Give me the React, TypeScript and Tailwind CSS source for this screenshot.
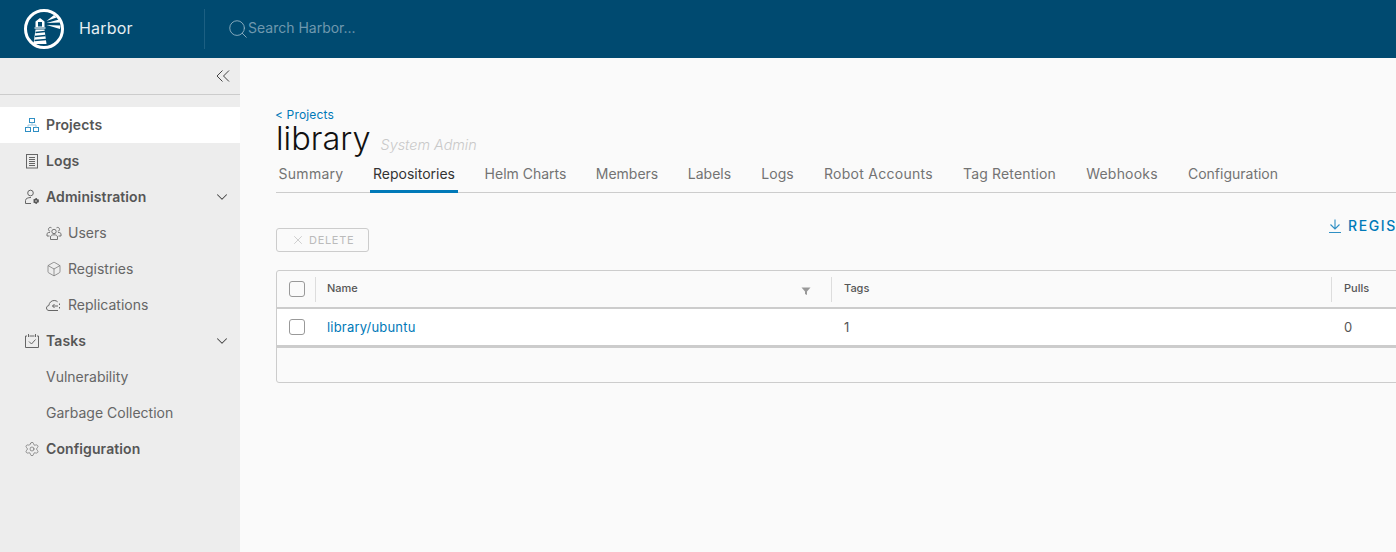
import { ChevronDown, Search, X, Box, Settings } from "lucide-react";

const font = "font-['Inter','Open_Sans',sans-serif]";

const tabs = [
  { label: "Summary", w: "w-[70px] tracking-[0.25px]" },
  { label: "Repositories", active: true, w: "w-[88px]" },
  { label: "Helm Charts", w: "w-[87px]" },
  { label: "Members", w: "w-[68px]" },
  { label: "Labels", w: "w-[49px]" },
  { label: "Logs", w: "w-[39px]" },
  { label: "Robot Accounts", w: "w-[115px] tracking-[0.28px]" },
  { label: "Tag Retention", w: "w-[99px] tracking-[0.15px]" },
  { label: "Webhooks", w: "w-[78px] tracking-[0.2px]" },
  { label: "Configuration", w: "w-[96px]" },
];

function HarborLogo() {
  return (
    <svg width="42" height="42" viewBox="0 0 42 42" fill="none">
      <circle cx="21" cy="21" r="18.5" stroke="white" strokeWidth="3" />
      {/* lantern */}
      <path d="M12.5 19 V13.5 L17 10 L21.5 13.5 V19 Z" fill="white" />
      <rect x="15" y="14" width="4" height="4.5" fill="#004a70" />
      <path d="M11.5 20 H22.5" stroke="white" strokeWidth="1.2" />
      {/* tower */}
      <path d="M12.5 21.5 H21.5 L23.5 36 H10.5 Z" fill="white" />
      <path d="M12.5 24.5 L22 23.5 M12 28.5 L22.5 27.5 M11.5 32.5 L23 31.5" stroke="#004a70" strokeWidth="1.6" />
      {/* beams */}
      <path d="M23.5 13 L31 7 L33.5 9.5 Z M23.5 15 L36 11.5 L37 14.5 Z M23.5 17 L37.5 17.5 L37 21 Z" fill="white" />
    </svg>
  );
}

function ProjectsIcon() {
  return (
    <svg width="16" height="16" viewBox="0 0 16 16" fill="none" stroke="#2f8fc4" strokeWidth="1">
      <rect x="5.5" y="1.5" width="5" height="4" />
      <rect x="1.5" y="10.5" width="5" height="4" />
      <rect x="9.5" y="10.5" width="5" height="4" />
      <path d="M8 5.5 V8 M4 10.5 V8 H12 V10.5" stroke="#9cc6de" />
    </svg>
  );
}

function LogsIcon() {
  return (
    <svg width="16" height="16" viewBox="0 0 16 16" fill="none" stroke="#666" strokeWidth="1">
      <rect x="2.5" y="1.5" width="11" height="13.5" />
      <path d="M5 4.5 H11 M5 6.5 H11 M5 8.5 H11 M5 10.5 H11 M5 12.5 H11" />
    </svg>
  );
}

function AdminIcon() {
  return (
    <svg width="16" height="16" viewBox="0 0 16 16" fill="none" stroke="#666" strokeWidth="1">
      <circle cx="6.5" cy="4" r="2.8" />
      <path d="M1.5 14.5 V11.5 C1.5 9.5 4 8.5 7 8.5 M1.5 14.5 H7" />
      <circle cx="12" cy="12" r="2.2" fill="#555" stroke="#555" strokeWidth="1.4" strokeDasharray="1.4 0.8" />
      <circle cx="12" cy="12" r="0.8" fill="#ededed" stroke="none" />
    </svg>
  );
}

function UsersIcon() {
  return (
    <svg width="16" height="16" viewBox="0 0 16 16" fill="none" stroke="#666" strokeWidth="0.9">
      <circle cx="8" cy="6.5" r="2.2" />
      <path d="M4.5 14.5 V12 C4.5 10.5 6 9.8 8 9.8 C10 9.8 11.5 10.5 11.5 12 V14.5 Z" />
      <path d="M5.5 2.8 A1.9 1.9 0 1 0 4.2 6.2 M10.5 2.8 A1.9 1.9 0 1 1 11.8 6.2" />
      <path d="M3.5 11 H1 V9 C1 8 2.2 7.4 4 7.4 M12.5 11 H15 V9 C15 8 13.8 7.4 12 7.4" />
    </svg>
  );
}

function CloudIcon() {
  return (
    <svg width="16" height="16" viewBox="0 0 16 16" fill="none" stroke="#666" strokeWidth="1">
      <path d="M12 13.5 H3 C1.4 13.5 0.5 12.4 0.5 11 C0.5 9.6 1.5 8.7 2.8 8.6 C3.2 5.5 5.4 3.5 8.2 3.5 C9.6 3.5 10.8 4 11.6 4.8" />
      <path d="M6.5 9 H12 M8.5 7 L6.5 9 L8.5 11" />
      <path d="M13.5 6.5 V8 M13.5 10 V11.5" />
    </svg>
  );
}

function TasksIcon() {
  return (
    <svg width="16" height="16" viewBox="0 0 16 16" fill="none" stroke="#666" strokeWidth="1">
      <path d="M3 3 H1.5 V14.5 H14.5 V3 H13" />
      <path d="M5.5 3 H10.5" />
      <path d="M4.5 1 V4 M11.5 1 V4" />
      <path d="M5 8.5 L7.5 11 L11.5 6.5" />
    </svg>
  );
}

function NavRow({ icon, label, active, chevron }: { icon: React.ReactNode; label: string; active?: boolean; chevron?: boolean }) {
  return (
    <div className={`flex h-9 items-center pl-[24px] pr-[9px] ${active ? "bg-white" : ""}`}>
      <span className="flex w-[22px] shrink-0">{icon}</span>
      <span className="pb-[2px] text-[14px] font-semibold tracking-[0.1px] text-[#565656]">{label}</span>
      {chevron && <ChevronDown className="ml-auto h-[18px] w-[18px] text-[#444]" strokeWidth={1.4} />}
    </div>
  );
}

function SubRow({ icon, label }: { icon?: React.ReactNode; label: string }) {
  return (
    <div className="flex h-9 items-center pl-[46px]">
      {icon && <span className="flex w-[22px] shrink-0">{icon}</span>}
      <span className="pb-[2px] text-[14px] text-[#666]">{label}</span>
    </div>
  );
}

export default function App() {
  return (
    <div className={`flex h-[552px] w-[1396px] flex-col overflow-hidden bg-[#fafafa] ${font}`}>
      {/* Header */}
      <header className="flex h-[58px] shrink-0 items-center bg-[#004a70]">
        <div className="flex h-10 w-[205px] shrink-0 items-center border-r border-[#1c5f82] pl-[23px]">
          <HarborLogo />
          <span className="mb-[2px] ml-[14px] text-[16px] tracking-[0.2px] text-[#e6eef2]">Harbor</span>
        </div>
        <Search className="ml-[22px] h-[22px] w-[22px] text-[#8fb0c2]" strokeWidth={1} />
        <span className="-ml-[1px] mb-[3px] text-[14px] text-[#6f98ae]">Search Harbor...</span>
      </header>

      <div className="flex min-h-0 flex-1">
        {/* Sidebar */}
        <aside className="w-[240px] shrink-0 bg-[#ededed]">
          <div className="flex h-[37px] items-center justify-end border-b border-[#ccc] pr-[10px]">
            <svg width="14" height="14" viewBox="0 0 14 14" fill="none" stroke="#444" strokeWidth="1">
              <path d="M6.5 1.5 L1 7 L6.5 12.5 M13 1.5 L7.5 7 L13 12.5" />
            </svg>
          </div>
          <nav className="mt-3">
            <NavRow icon={<ProjectsIcon />} label="Projects" active />
            <NavRow icon={<LogsIcon />} label="Logs" />
            <NavRow icon={<AdminIcon />} label="Administration" chevron />
            <SubRow icon={<UsersIcon />} label="Users" />
            <SubRow icon={<Box className="h-4 w-4 text-[#666]" strokeWidth={1} />} label="Registries" />
            <SubRow icon={<CloudIcon />} label="Replications" />
            <NavRow icon={<TasksIcon />} label="Tasks" chevron />
            <SubRow label="Vulnerability" />
            <SubRow label="Garbage Collection" />
            <NavRow icon={<Settings className="h-4 w-4 text-[#666]" strokeWidth={1} />} label="Configuration" />
          </nav>
        </aside>

        {/* Main */}
        <main className="min-w-0 flex-1 overflow-hidden pl-9 pt-[50px]">
          <div className="w-[1300px]">
            <div className="-ml-[1px] text-[12px] leading-[14px] tracking-[0.15px] text-[#0079b8]">&lt; Projects</div>
            <div className="flex h-[35px] items-end">
              <h1 className="mb-[1px] text-[32.5px] font-light leading-[34px] text-[#111]">library</h1>
              <span className="mb-[1px] ml-[10px] text-[14.4px] font-light italic text-[#c9c9c9]">System Admin</span>
            </div>
            <div className="flex h-[36px] items-stretch gap-6 border-b border-[#ccc]">
              {tabs.map((t) => (
                <div
                  key={t.label}
                  className={`-mb-px flex h-[36px] items-center justify-center whitespace-nowrap border-b-[3px] text-[14px] ${t.w} ${t.active ? "border-[#0079b8] text-[#333]" : "border-transparent text-[#737373]"}`}
                >
                  {t.label}
                </div>
              ))}
            </div>

            <div className="mt-[23px] flex items-start justify-between">
              <div className="mt-[12px] flex h-6 w-[93px] items-center rounded-[3px] border border-[#ccc] pl-[14px]">
                <X className="h-[14px] w-[14px] text-[#bbb]" strokeWidth={1.2} />
                <span className="ml-[4px] text-[11px] tracking-[0.7px] text-[#bbb]">DELETE</span>
              </div>
              <div className="-mt-[1px] flex w-[249px] items-center">
                <svg width="16" height="16" viewBox="0 0 16 16" fill="none" stroke="#2f8fc4" strokeWidth="1.1">
                  <path d="M8 1.5 V11 M3.5 6.5 L8 11 L12.5 6.5 M2 14.5 H14" />
                </svg>
                <span className="mb-[1px] ml-[5px] whitespace-nowrap text-[14px] font-medium tracking-[1.6px] text-[#0079b8]">REGISTRY CERTIFICATE</span>
              </div>
            </div>

            {/* Table */}
            <div className="mt-[18px] w-[1300px] rounded-[3px] border border-[#ccc]">
              <div className="flex h-[38px] items-center border-b-2 border-[#ccc]">
                <div className="flex w-[38px] items-center justify-center pl-[1px]">
                  <div className="h-4 w-4 rounded-[3px] border border-[#999]" />
                </div>
                <div className="flex h-[25px] w-[516px] items-center border-l border-[#ddd] pl-[11px] pr-[20px]">
                  <span className="mb-[1px] text-[11px] font-medium text-[#565656]">Name</span>
                  <svg className="ml-auto mt-[3px]" width="10" height="10" viewBox="0 0 10 10">
                    <path d="M0.5 1.5 H9.5 L6 5.5 V9 L4 8 V5.5 Z" fill="#999" />
                  </svg>
                </div>
                <div className="flex h-[25px] w-[500px] items-center border-l border-[#ddd] pl-[12px]">
                  <span className="mb-[1px] text-[11px] font-medium text-[#565656]">Tags</span>
                </div>
                <div className="flex h-[25px] items-center border-l border-[#ddd] pl-[12px]">
                  <span className="mb-[1px] text-[11px] font-medium text-[#565656]">Pulls</span>
                </div>
              </div>
              <div className="flex h-[39px] items-center border-b-[3px] border-[#ccc] bg-white">
                <div className="flex w-[38px] items-center justify-center pl-[1px]">
                  <div className="h-4 w-4 rounded-[3px] border border-[#999]" />
                </div>
                <div className="w-[516px] pl-[12px] pt-[1px] text-[13px] tracking-[0.2px] text-[#0079b8]">library/ubuntu</div>
                <div className="w-[500px] pl-[13px] pt-[1px] text-[13px] text-[#565656]">1</div>
                <div className="pl-[13px] pt-[1px] text-[13px] text-[#565656]">0</div>
              </div>
              <div className="h-[34px]" />
            </div>
          </div>
        </main>
      </div>
    </div>
  );
}
